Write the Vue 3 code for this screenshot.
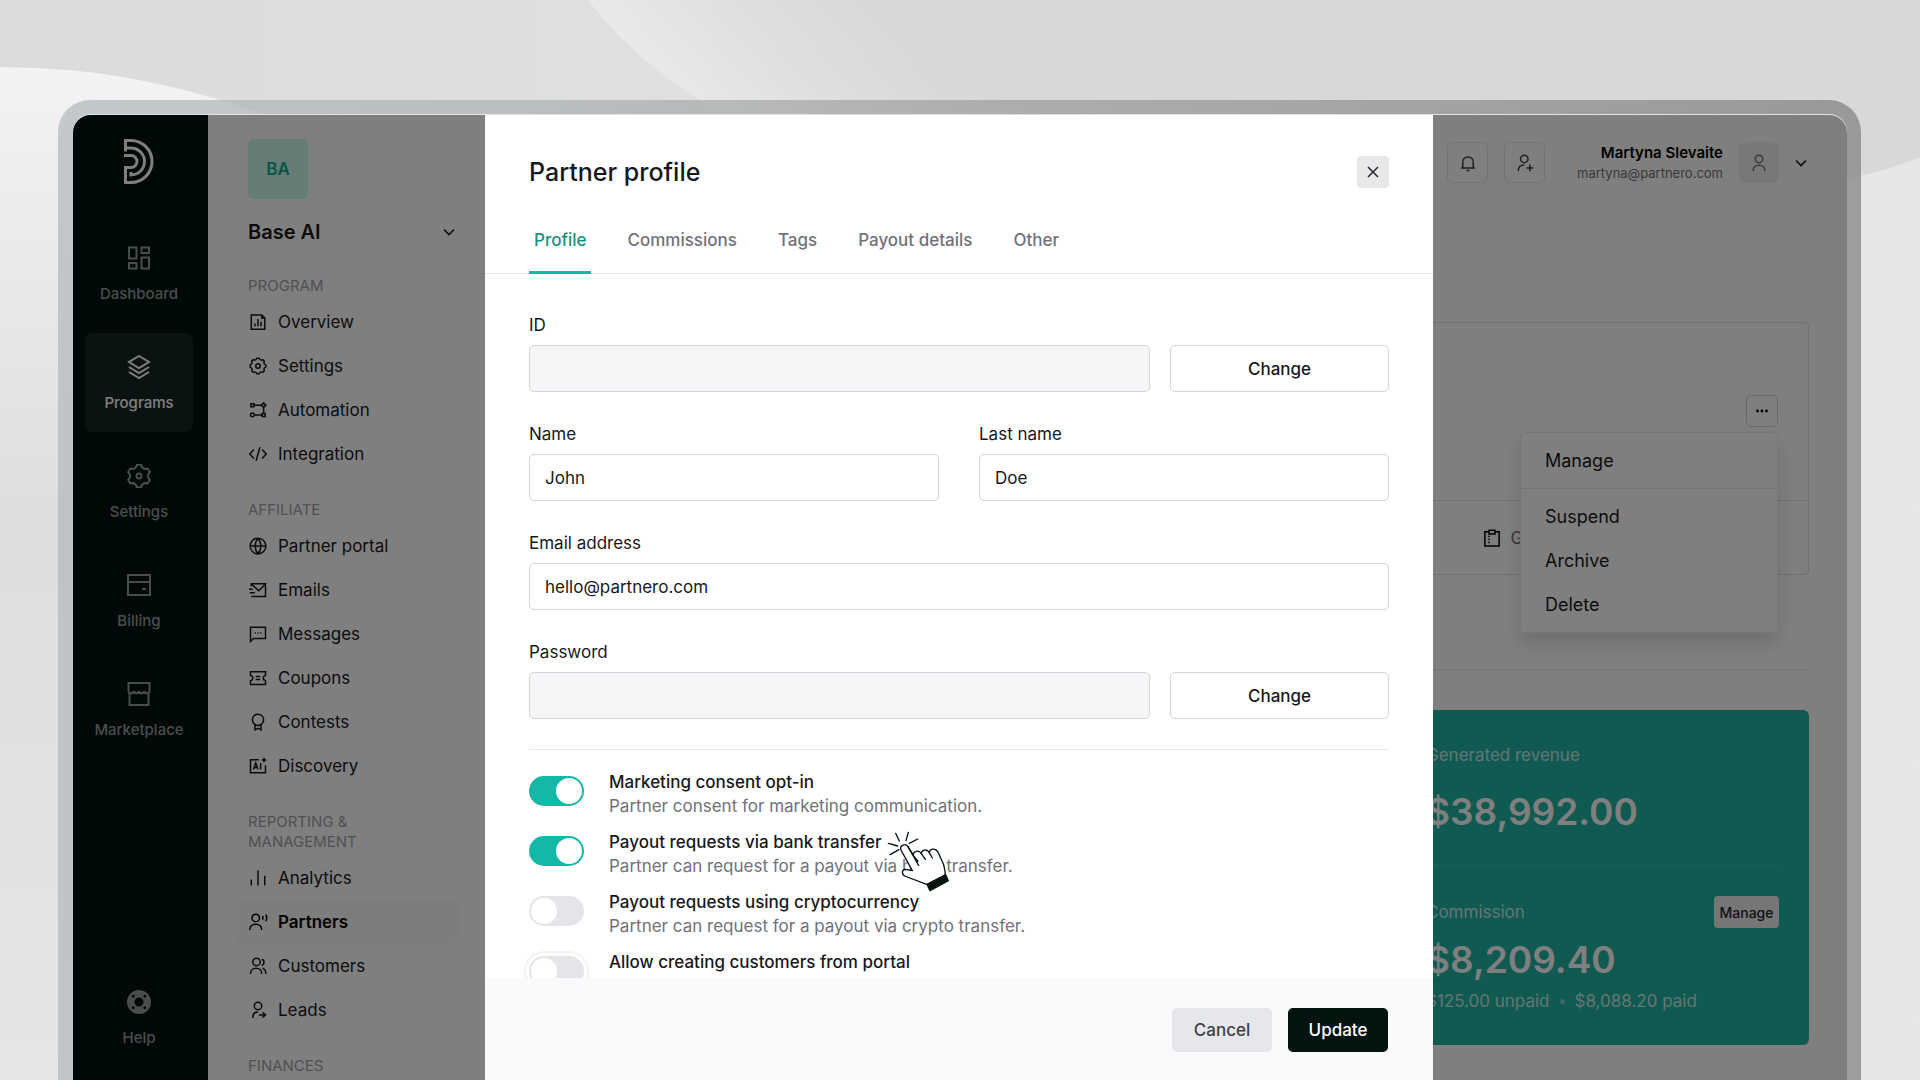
<template>
  <div class="page">
    <svg class="backdrop" viewBox="0 0 1920 1080" preserveAspectRatio="none" aria-hidden="true">
      <defs>
        <linearGradient id="sheet" gradientUnits="userSpaceOnUse" x1="640" y1="56" x2="800" y2="-86">
          <stop offset="0" stop-color="#e9e9e9" />
          <stop offset="0.5" stop-color="#dfdfdf" />
          <stop offset="1" stop-color="#d8d8d6" />
        </linearGradient>
        <linearGradient id="disc" x1="0" y1="0" x2="0" y2="1">
          <stop offset="0" stop-color="#f3f3f3" />
          <stop offset="0.3" stop-color="#dedede" />
          <stop offset="0.7" stop-color="#e6e6e6" />
          <stop offset="1" stop-color="#dedede" />
        </linearGradient>
      </defs>
      <path d="M588 0Q630 56 700 100C1000 330 1500 300 1855 177Q1895 168 1920 157V0z" fill="url(#sheet)" />
      <circle cx="0" cy="817" r="750" fill="url(#disc)" />
    </svg>

    <div class="device">
      <div class="screen">
        <nav class="rail">
          <svg class="logo" viewBox="0 0 30 45" aria-hidden="true">
            <path d="M1.5 12.5v-11H7a21 21 0 0 1 0 42H1.5V28.500H7a6 6 0 0 0 0-12H0" />
            <path d="M0 9h7a13.500 13.500 0 0 1 0 27H7V33" />
          </svg>
          <a
            v-for="item in railItems"
            :key="item.label"
            href="#"
            class="rail-item"
            :class="{ active: item.active, last: item.last }"
          >
            <svg class="rail-icon" viewBox="0 0 24 24" aria-hidden="true">
              <path :d="item.icon" :class="{ solid: item.solid }" />
            </svg>
            <span>{{ item.label }}</span>
          </a>
        </nav>

        <aside class="sidebar">
          <div class="program-badge">BA</div>
          <button class="program-switch" type="button">
            <span>Base AI</span>
            <svg class="chevron" viewBox="0 0 12 12" aria-hidden="true"><path d="M1 3.500l5 5 5-5" /></svg>
          </button>
          <section v-for="group in menuGroups" :key="group.title" class="menu-group">
            <h2>{{ group.title }}</h2>
            <a
              v-for="item in group.items"
              :key="item.label"
              href="#"
              class="menu-item"
              :class="{ active: item.active }"
            >
              <svg class="menu-icon" viewBox="0 0 24 24" aria-hidden="true"><path :d="item.icon" /></svg>
              <span>{{ item.label }}</span>
            </a>
          </section>
        </aside>

        <main class="main">
          <header class="topbar">
            <button class="icon-button" type="button" aria-label="Notifications">
              <svg viewBox="0 0 24 24" aria-hidden="true"><path :d="icons.bell" /></svg>
            </button>
            <button class="icon-button" type="button" aria-label="Invite">
              <svg viewBox="0 0 24 24" aria-hidden="true"><path :d="icons.userAdd" /></svg>
            </button>
            <div class="account">
              <strong>Martyna Slevaite</strong>
              <span>martyna@partnero.com</span>
            </div>
            <div class="avatar">
              <svg viewBox="0 0 24 24" aria-hidden="true"><path :d="icons.user" /></svg>
            </div>
            <svg class="chevron" viewBox="0 0 12 12" aria-hidden="true"><path d="M1 3.500l5 5 5-5" /></svg>
          </header>

          <section class="partner-card">
            <div class="partner-top">
              <div class="more">
                <button class="more-button" type="button" aria-label="More">
                  <svg viewBox="0 0 12 12" aria-hidden="true">
                    <circle cx="1.500" cy="6" r="1.400" /><circle cx="6" cy="6" r="1.400" /><circle cx="10.500" cy="6" r="1.400" />
                  </svg>
                </button>
                <div class="more-menu">
                  <button v-for="action in actions" :key="action" type="button">{{ action }}</button>
                </div>
              </div>
            </div>
            <div class="partner-bottom">
              <svg viewBox="0 0 24 24" aria-hidden="true"><path :d="icons.clipboard" /></svg>
              <span>Group</span>
            </div>
          </section>

          <hr class="rule" />

          <section class="revenue">
            <p class="revenue-label">Generated revenue</p>
            <p class="revenue-value">$38,992.00</p>
            <hr />
            <div class="revenue-row">
              <p class="revenue-label">Commission</p>
              <button type="button">Manage</button>
            </div>
            <p class="revenue-value">$8,209.40</p>
            <p class="revenue-note"><span>$125.00 unpaid</span><i></i><span>$8,088.20 paid</span></p>
          </section>
        </main>

        <div class="overlay">
          <div class="modal" role="dialog" aria-labelledby="modal-title">
            <header class="modal-header">
              <div class="modal-title">
                <h1 id="modal-title">Partner profile</h1>
                <button class="close" type="button" aria-label="Close">
                  <svg viewBox="0 0 12 12" aria-hidden="true"><path d="M1 1l10 10M11 1L1 11" /></svg>
                </button>
              </div>
              <nav class="tabs">
                <button
                  v-for="tab in tabs"
                  :key="tab"
                  type="button"
                  :class="{ active: tab === activeTab }"
                  @click="activeTab = tab"
                >
                  {{ tab }}
                </button>
              </nav>
            </header>

            <form class="modal-body" @submit.prevent>
              <div class="field">
                <label for="partner-id">ID</label>
                <div class="locked">
                  <input id="partner-id" type="text" readonly />
                  <button type="button">Change</button>
                </div>
              </div>
              <div class="names">
                <div class="field">
                  <label for="first-name">Name</label>
                  <input id="first-name" v-model="form.name" type="text" />
                </div>
                <div class="field">
                  <label for="last-name">Last name</label>
                  <input id="last-name" v-model="form.lastName" type="text" />
                </div>
              </div>
              <div class="field">
                <label for="email">Email address</label>
                <input id="email" v-model="form.email" type="email" />
              </div>
              <div class="field">
                <label for="password">Password</label>
                <div class="locked">
                  <input id="password" type="password" readonly />
                  <button type="button">Change</button>
                </div>
              </div>

              <div class="options">
                <div v-for="option in options" :key="option.id" class="option">
                  <input
                    :id="option.id"
                    v-model="option.on"
                    type="checkbox"
                    :class="{ ring: option.ring }"
                  />
                  <label :for="option.id">
                    <strong>{{ option.title }}</strong>
                    <span>{{ option.text }}</span>
                  </label>
                </div>
              </div>
            </form>

            <footer class="modal-footer">
              <button class="cancel" type="button">Cancel</button>
              <button class="update" type="button">Update</button>
            </footer>

            <svg class="pointer" viewBox="0 0 240 240" aria-hidden="true">
              <path class="ray" d="M47 40l11 23M85 37l-7 25M113 57L88 70M25 70l28 8M30 104l27-15" />
              <path
                class="hand"
                d="M142 194L74 168C64 162 65 149 76 148L97 152L63 90C58 76 76 68 84 80L100 106C99 94 116 88 124 101C124 88 141 86 148 98C149 85 166 83 174 96L190 132C194 142 195 154 196 166z"
              />
              <path class="ray" d="M84 80l32 56M100 106l14 18M124 101l12 17M148 98l9 16" />
              <path class="cuff" d="M141 193l56-29 8 18-55 30z" />
            </svg>
          </div>
        </div>
      </div>
    </div>
  </div>
</template>

<script setup>
import { ref, reactive } from 'vue'

// closed outline with n rounded teeth, first tooth pointing up
function gear(n, outer, inner, half) {
  const point = (r, deg) => {
    const a = ((deg - 90) * Math.PI) / 180
    return `${(12 + r * Math.cos(a)).toFixed(2)} ${(12 + r * Math.sin(a)).toFixed(2)}`
  }
  const step = 360 / n
  let d = ''
  for (let i = 0; i < n; i++) {
    const mid = i * step
    d += `${i ? 'L' : 'M'}${point(outer, mid - half)}L${point(outer, mid + half)}`
    d += `Q${point(inner, mid + step / 2)} ${point(outer, mid + step - half)}`
  }
  return d + 'z'
}

const icons = {
  dashboard: 'M2 1.500h7.500v11H2zM14.500 1.500H22V7h-7.500zM2 17h7.500v5.500H2zM14.500 11.500H22v11h-7.500z',
  layers: 'M12 1l10 6-10 6L2 7zM2 12l10 6 10-6M2 17l10 6 10-6',
  gearLarge: gear(6, 11.5, 7, 10) + 'M12 9.500a2.500 2.500 0 1 0 0 5 2.500 2.500 0 1 0 0-5z',
  billing: 'M1 2h22v20H1zM1 9h22M15 16h4',
  market: 'M1.500 1h21v8c0 3-5 3-5.500 0-.5 3-4.500 3-5 0-.5 3-4.500 3-5 0-.5 3-5.500 3-5.500 0zM2.500 11v12h19V11',
  help: 'M12 0a12 12 0 1 0 0 24 12 12 0 1 0 0-24zM12 7.500a4.500 4.500 0 1 1 0 9 4.500 4.500 0 1 1 0-9zM6.200 4.400l1.800 1.800-1.800 1.800-1.800-1.800zM17.800 4.400l1.800 1.800-1.800 1.800-1.800-1.800zM6.200 16l1.800 1.800-1.800 1.800-1.800-1.800zM17.800 16l1.800 1.800-1.800 1.800-1.800-1.800z',
  overview: 'M3 2.500h14l4 4v15H3zM17 2.500v4h4M8 14v3.500M12 8v9.500M16 11.500v6',
  gearSmall: gear(8, 10.5, 7.5, 8) + 'M12 9a3 3 0 1 0 0 6 3 3 0 1 0 0-6z',
  automation: 'M2.500 3.500h4v4h-4zM17.500 16.500h4v4h-4zM19.500 2.500l3 3-3 3-3-3zM4.500 16a2.500 2.500 0 1 0 0 5 2.500 2.500 0 1 0 0-5zM7 5.500h9M19.500 9v7M7.500 18.500h10',
  code: 'M6.500 6L1 12l5.500 6M17.500 6L23 12l-5.500 6M14.500 3l-5 18',
  globe: 'M12 1.500a10.500 10.500 0 1 0 0 21 10.500 10.500 0 1 0 0-21zM2 12h20M12 2c-5 5-5 15 0 20M12 2c5 5 5 15 0 20',
  mail: 'M3 7V3.500h19v17H3M3 4l10 9 9-9M0 11h5M1 15.500h7',
  message: 'M2 22V3h20v15H6zM7.500 10.500h1.600M11.200 10.500h1.600M15 10.500h1.600',
  coupon: 'M2 3.500h20v5c-4 1-4 6 0 7v5H2v-5c4-1 4-6 0-7zM9 10h6M9 14h6',
  award: 'M12 1.500a7.500 7.500 0 1 0 0 15 7.500 7.500 0 1 0 0-15zM8 15.500V22.500l4-2 4 2V15.500',
  discovery: 'M13 3.500H2v17.500h20V11M6 16.500l3-8.500 3 8.500M7 14h4M15.500 8v8.500M20 1v6M17 4h6',
  analytics: 'M3 14v8M12 2v20M21 9v13',
  partners: 'M9 1.500a5 5 0 1 0 0 10 5 5 0 1 0 0-10zM1 22.500c0-10 16-10 16 0M18.500 4v5M22.500 2c1.500 3 1.500 6 0 9',
  customers: 'M10 1.500a5 5 0 1 0 0 10 5 5 0 1 0 0-10zM2 22.500c0-10 15-10 15 0M17 3c4 1 4 7 0 8M18 14.500c3 1.500 4.500 4 4.500 8',
  leads: 'M12 1.500a5 5 0 1 0 0 10 5 5 0 1 0 0-10zM5 22.500c0-5 3-8 7-8M13 18.500h8M18 15l4 3.500-4 3.500',
  bell: 'M5 18V11c0-9.500 14-9.500 14 0v7M2.500 18.500h19M10 22h4',
  userAdd: 'M11 1.500a5 5 0 1 0 0 10 5 5 0 1 0 0-10zM3 22.500c0-5 3-8 8-8M14 18.500h9M18.500 14v9',
  user: 'M12 1.500a5 5 0 1 0 0 10 5 5 0 1 0 0-10zM4 22.500c0-10 16-10 16 0',
  clipboard: 'M8 3.500H2.500v19h19v-19H16M8 1.500h8v5H8zM7 10h2M7 14h2M7 18h2'
}

const railItems = [
  { label: 'Dashboard', icon: icons.dashboard },
  { label: 'Programs', icon: icons.layers, active: true },
  { label: 'Settings', icon: icons.gearLarge },
  { label: 'Billing', icon: icons.billing },
  { label: 'Marketplace', icon: icons.market },
  { label: 'Help', icon: icons.help, solid: true, last: true }
]

const menuGroups = [
  {
    title: 'PROGRAM',
    items: [
      { label: 'Overview', icon: icons.overview },
      { label: 'Settings', icon: icons.gearSmall },
      { label: 'Automation', icon: icons.automation },
      { label: 'Integration', icon: icons.code }
    ]
  },
  {
    title: 'AFFILIATE',
    items: [
      { label: 'Partner portal', icon: icons.globe },
      { label: 'Emails', icon: icons.mail },
      { label: 'Messages', icon: icons.message },
      { label: 'Coupons', icon: icons.coupon },
      { label: 'Contests', icon: icons.award },
      { label: 'Discovery', icon: icons.discovery }
    ]
  },
  {
    title: 'REPORTING & MANAGEMENT',
    items: [
      { label: 'Analytics', icon: icons.analytics },
      { label: 'Partners', icon: icons.partners, active: true },
      { label: 'Customers', icon: icons.customers },
      { label: 'Leads', icon: icons.leads }
    ]
  },
  { title: 'FINANCES', items: [] }
]

const actions = ['Manage', 'Suspend', 'Archive', 'Delete']
const tabs = ['Profile', 'Commissions', 'Tags', 'Payout details', 'Other']
const activeTab = ref('Profile')

const form = reactive({
  name: 'John',
  lastName: 'Doe',
  email: 'hello@partnero.com'
})

const options = reactive([
  { id: 'marketing', title: 'Marketing consent opt-in', text: 'Partner consent for marketing communication.', on: true },
  { id: 'bank', title: 'Payout requests via bank transfer', text: 'Partner can request for a payout via bank transfer.', on: true },
  { id: 'crypto', title: 'Payout requests using cryptocurrency', text: 'Partner can request for a payout via crypto transfer.', on: false },
  { id: 'portal', title: 'Allow creating customers from portal', text: '', on: false, ring: true }
])
</script>

<style>
body {
  margin: 0;
}
</style>

<style scoped>
.page {
  position: relative;
  display: flex;
  height: 100vh;
  overflow: hidden;
  box-sizing: border-box;
  padding: 100px 59px 0 58px;
  background: linear-gradient(90deg, #dbdbdb, #e0e0e0 35%, #e7e7e7);
  font-family: Inter, "Liberation Sans", sans-serif;
  color: #18181b;
}

.page *,
.page *::before {
  box-sizing: border-box;
}

button,
input {
  font: inherit;
  color: inherit;
}

button {
  padding: 0;
  border: 0;
  background: none;
  cursor: pointer;
}

a {
  color: inherit;
  text-decoration: none;
}

h1,
h2,
p,
hr {
  margin: 0;
}

hr {
  border: 0;
}

svg path {
  fill: none;
  stroke: currentColor;
  stroke-width: 2;
}

.backdrop {
  position: absolute;
  top: 0;
  left: 0;
  width: 100%;
  height: 100%;
}

.backdrop path {
  fill: url(#sheet);
  stroke: none;
}

.device {
  position: relative;
  display: flex;
  flex: 1;
  min-width: 0;
  padding: 15px 14px 0 15px;
  border-radius: 32px 32px 0 0;
  background: linear-gradient(90deg, rgba(175, 183, 187, 0.7), rgba(171, 178, 180, 0.7) 25%, rgba(157, 157, 158, 0.7) 50%, rgba(126, 126, 128, 0.7));
}

.screen {
  position: relative;
  display: flex;
  flex: 1;
  min-width: 0;
  overflow: hidden;
  border-radius: 18px 18px 0 0;
  background: #fff;
  box-shadow: 0 -1px 0 #e2e2e2;
}

/* dark rail */
.rail {
  display: flex;
  flex-direction: column;
  flex: none;
  gap: 10px;
  width: 135px;
  padding: 24px 15px 13px 12px;
  background: #031310;
  color: #939c9a;
}

.logo {
  width: 30px;
  height: 45px;
  margin: 0 0 30px 39px;
  color: #fff;
}

.logo path {
  stroke-width: 3;
}

.rail-item {
  display: flex;
  flex-direction: column;
  align-items: center;
  gap: 14px;
  height: 99px;
  padding-top: 22px;
  border-radius: 8px;
  font-size: 15px;
  line-height: 20px;
  font-weight: 500;
}

.rail-item.active {
  background: #172624;
  color: #fff;
}

.rail-item.last {
  margin-top: auto;
}

.rail-icon {
  width: 24px;
  height: 24px;
}

.rail-icon .solid {
  fill: currentColor;
  fill-rule: evenodd;
  stroke: none;
}

/* program menu */
.sidebar {
  flex: none;
  width: 277px;
  padding: 24px 26px 0;
}

.program-badge {
  display: flex;
  align-items: center;
  justify-content: center;
  width: 60px;
  height: 60px;
  margin-left: 14px;
  border-radius: 5px;
  background: #ccfbee;
  color: #14a88f;
  font-size: 17px;
  font-weight: 600;
}

.program-switch {
  display: flex;
  align-items: center;
  justify-content: space-between;
  width: 100%;
  margin: 20px 0 31px;
  padding: 0 4px 0 14px;
  font-size: 20px;
  line-height: 26px;
  font-weight: 600;
}

.chevron {
  width: 12px;
  height: 12px;
}

.chevron path {
  stroke-width: 1.6;
}

.menu-group {
  margin-bottom: 24px;
}

.menu-group h2 {
  width: 150px;
  margin: 0 0 4px 14px;
  color: #a1a1aa;
  font-size: 15px;
  line-height: 20px;
  font-weight: 400;
}

.menu-item {
  display: flex;
  align-items: center;
  gap: 10px;
  height: 44px;
  padding-left: 14px;
  border-radius: 5px;
  font-size: 17px;
}

.menu-item.active {
  background: #fafafa;
  color: #000;
  font-weight: 600;
}

.menu-icon {
  width: 20px;
  height: 18px;
}

/* page under the dialog */
.main {
  flex: 1;
  min-width: 0;
  padding: 27px 38px 0;
}

.topbar {
  display: flex;
  align-items: center;
  justify-content: flex-end;
  gap: 16px;
  height: 41px;
  padding-right: 2px;
}

.icon-button,
.avatar {
  display: flex;
  align-items: center;
  justify-content: center;
  height: 41px;
  border-radius: 6px;
}

.icon-button {
  width: 41px;
  border: 1px solid #e4e4e7;
  color: #3f3f46;
}

.icon-button svg,
.avatar svg {
  width: 18px;
  height: 18px;
}

.avatar {
  width: 40px;
  background: #f1f1f2;
  color: #71717a;
}

.account {
  display: flex;
  flex-direction: column;
  min-width: 144px;
  margin-left: 16px;
  text-align: right;
  font-size: 13px;
  line-height: 20px;
  color: #71717a;
}

.account strong {
  font-size: 15px;
  font-weight: 600;
  color: #000;
}

.partner-card {
  margin-top: 139px;
  border: 1px solid #e0e0e2;
  border-radius: 5px;
}

.partner-top {
  display: flex;
  justify-content: flex-end;
  height: 178px;
  padding: 72px 30px 0;
  border-bottom: 1px solid #e0e0e2;
}

.more {
  position: relative;
  height: 32px;
}

.more-button {
  display: flex;
  align-items: center;
  justify-content: center;
  width: 32px;
  height: 32px;
  border: 1px solid #d4d4d8;
  border-radius: 5px;
}

.more-button svg {
  width: 12px;
  height: 12px;
}

.more-menu {
  position: absolute;
  top: 37px;
  right: 0;
  display: flex;
  flex-direction: column;
  width: 258px;
  padding-bottom: 6px;
  border: 1px solid #ececee;
  border-radius: 5px;
  background: #fff;
  box-shadow: 0 10px 18px rgba(0, 0, 0, 0.14);
}

.more-menu button {
  height: 44px;
  padding-left: 24px;
  text-align: left;
  font-size: 18px;
}

.more-menu button:first-child {
  height: 56px;
  margin-bottom: 5px;
  border-bottom: 1px solid #e8e8ea;
}

.partner-bottom {
  display: flex;
  align-items: center;
  justify-content: flex-end;
  gap: 10px;
  height: 73px;
  padding-right: 248px;
  font-size: 17px;
  color: #71717a;
}

.partner-bottom svg {
  width: 18px;
  height: 18px;
  color: #000;
}

.rule {
  height: 1px;
  margin: 94px 0 40px;
  background: #e8e8ea;
}

.revenue {
  width: 413px;
  height: 335px;
  margin-left: auto;
  padding: 33px 30px 0;
  border-radius: 6px;
  background: #20b4a4;
  color: #fff;
}

.revenue-label,
.revenue-note {
  font-size: 17px;
  line-height: 24px;
  color: rgba(255, 255, 255, 0.75);
}

.revenue-value {
  font-size: 37px;
  line-height: 48px;
  font-weight: 600;
}

.revenue > .revenue-label {
  margin-bottom: 21px;
}

.revenue hr {
  height: 1px;
  margin: 29px 0 30px;
  background: rgba(255, 255, 255, 0.12);
}

.revenue-row {
  display: flex;
  align-items: center;
  justify-content: space-between;
  height: 32px;
  margin-bottom: 8px;
}

.revenue-row button {
  width: 65px;
  height: 32px;
  border-radius: 4px;
  background: #ececee;
  color: #27272a;
  font-size: 14px;
  font-weight: 500;
}

.revenue-note {
  display: flex;
  align-items: center;
  gap: 10px;
  margin-top: 5px;
}

.revenue-note i {
  width: 5px;
  height: 5px;
  border-radius: 50%;
  background: rgba(255, 255, 255, 0.4);
}

/* dialog */
.overlay {
  position: absolute;
  top: 0;
  right: 0;
  bottom: 0;
  left: 0;
  display: flex;
  justify-content: center;
  padding-right: 2px;
  background: rgba(0, 0, 0, 0.5);
}

.modal {
  position: relative;
  display: flex;
  flex-direction: column;
  width: 948px;
  background: #fff;
}

.modal-header {
  padding: 41px 44px 0;
  border-bottom: 1px solid #e5e7eb;
}

.modal-title {
  display: flex;
  align-items: center;
  justify-content: space-between;
  height: 32px;
}

.modal-title h1 {
  font-size: 25px;
  line-height: 32px;
  font-weight: 500;
}

.close {
  display: flex;
  align-items: center;
  justify-content: center;
  width: 32px;
  height: 32px;
  border-radius: 4px;
  background: #e8e8eb;
  color: #27272a;
}

.close svg {
  width: 12px;
  height: 12px;
}

.close path {
  stroke-width: 1.5;
}

.tabs {
  display: flex;
  gap: 31px;
  margin: 17px 0 -1px;
}

.tabs button {
  height: 69px;
  padding: 0 5px;
  border-top: 3px solid transparent;
  border-bottom: 3px solid transparent;
  color: #71717a;
  font-size: 17px;
  font-weight: 500;
}

.tabs .active {
  border-bottom-color: #14b8a6;
  color: #16937f;
}

.modal-body {
  display: flex;
  flex-direction: column;
  flex: 1;
  gap: 30px;
  min-height: 0;
  overflow: hidden;
  padding: 39px 44px 0;
  font-size: 17px;
}

.field {
  display: flex;
  flex-direction: column;
  flex: 1 0 auto;
  gap: 8px;
}

.modal-body > .field {
  flex: none;
}

.field label {
  line-height: 24px;
}

.field input,
.locked button {
  width: 100%;
  height: 47px;
  padding: 0 15px;
  border: 1px solid #d4d4d8;
  border-radius: 5px;
  background: #fff;
  outline: none;
}

.field input[readonly] {
  background: #f4f6f8;
}

.names {
  display: grid;
  grid-template-columns: 1fr 1fr;
  gap: 40px;
}

.locked {
  display: grid;
  grid-template-columns: 1fr 219px;
  gap: 20px;
}

.locked button {
  font-weight: 500;
}

.options {
  display: flex;
  flex-direction: column;
  gap: 12px;
  padding-top: 20px;
  border-top: 1px solid #e8e8eb;
}

.option {
  display: flex;
  gap: 25px;
}

.option input {
  flex: none;
  appearance: none;
  width: 55px;
  height: 30px;
  margin: 6px 0 0;
  padding: 2px;
  border-radius: 15px;
  background: #e4e5e8;
}

.option input::before {
  content: "";
  display: block;
  width: 26px;
  height: 26px;
  border-radius: 50%;
  background: #fff;
}

.option input:checked {
  background: #14b8a6;
}

.option input:checked::before {
  margin-left: 25px;
}

.option .ring {
  box-shadow: 0 0 0 3px #fff, 0 0 0 5px #f2f2f4;
}

.option label {
  display: flex;
  flex-direction: column;
  height: 48px;
  line-height: 24px;
}

.option strong {
  font-weight: 500;
}

.option span {
  color: #71717a;
}

.modal-footer {
  position: relative;
  display: flex;
  flex: none;
  justify-content: flex-end;
  gap: 16px;
  padding: 30px 45px 28px;
  background: #f9fafc;
}

.modal-footer button {
  width: 100px;
  height: 44px;
  border-radius: 5px;
  font-size: 17px;
  font-weight: 500;
}

.modal-footer .cancel {
  background: #e6e7eb;
  color: #3f3f46;
}

.modal-footer .update {
  background: #031310;
  color: #fff;
}

.pointer {
  position: absolute;
  top: 705px;
  left: 395px;
  width: 80px;
  height: 80px;
  color: #031310;
}

.pointer path {
  stroke-width: 4;
  stroke-linecap: round;
  stroke-linejoin: round;
}

.pointer .hand {
  fill: #fff;
}

.pointer .cuff {
  fill: currentColor;
}
</style>
